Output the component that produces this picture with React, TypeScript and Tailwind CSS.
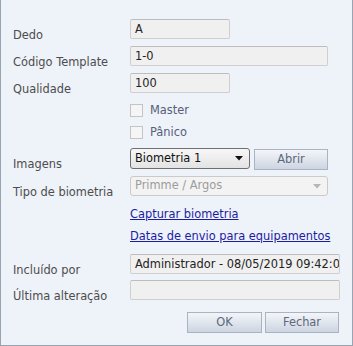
const font = "font-['DejaVu_Sans',Verdana,sans-serif]";

function Label({ text }: { text: string }) {
  return <div className="w-[129px] shrink-0 pt-[8px] pl-[12px] text-[#4d4d4d]">{text}</div>;
}

function TextBox({ value, width }: { value: string; width: string }) {
  return (
    <div
      className={`${width} h-[20px] rounded-[2px] border border-[#cfcfcf] border-t-[#bdbdbd] bg-[#f0f0f0] px-[4px] leading-[18px] text-[#222] overflow-hidden whitespace-nowrap`}
    >
      {value}
    </div>
  );
}

function Check({ label }: { label: string }) {
  return (
    <div className="flex items-center h-[13px] pl-[129px]">
      <div className="w-[13px] h-[13px] border border-[#c4c4c4] bg-[#f5f5f5]" />
      <span className="ml-[7px] text-[#56607a]">{label}</span>
    </div>
  );
}

function BlueButton({ text, width }: { text: string; width: string }) {
  return (
    <div
      className={`${width} h-[21px] border border-[#a9b3c3] bg-[linear-gradient(#f3f5f9,#e2e7ef_45%,#cdd5e1)] text-center leading-[19px] text-[#5e687c]`}
    >
      {text}
    </div>
  );
}

export default function App() {
  return (
    <div className={`${font} text-[11.4px] w-[353px] h-[346px] bg-[#eef2f9] border-x border-b border-[#9aa3b2] pt-[19px]`}>
      {/* Dedo */}
      <div className="flex h-[20px]">
        <Label text="Dedo" />
        <TextBox value="A" width="w-[100px]" />
      </div>
      <div className="flex h-[20px] mt-[7px]">
        <Label text="Código Template" />
        <TextBox value="1-0" width="w-[198px]" />
      </div>
      <div className="flex h-[20px] mt-[7px]">
        <Label text="Qualidade" />
        <TextBox value="100" width="w-[100px]" />
      </div>

      <div className="mt-[11px]">
        <Check label="Master" />
      </div>
      <div className="mt-[9px]">
        <Check label="Pânico" />
      </div>

      {/* Imagens */}
      <div className="flex h-[21px] mt-[9px]">
        <Label text="Imagens" />
        <div className="w-[120px] h-[21px] rounded-[3px] border border-[#6f6f6f] bg-[linear-gradient(#f7f7f7,#e3e3e3)] flex items-center pl-[4px] pr-[6px] text-[#111]">
          <span className="flex-1">Biometria 1</span>
          <svg width="8" height="5" viewBox="0 0 8 5">
            <path d="M0 0h8L4 4.5z" fill="#111" />
          </svg>
        </div>
        <div className="ml-[4px] mt-[1px]">
          <BlueButton text="Abrir" width="w-[74px]" />
        </div>
      </div>

      {/* Tipo */}
      <div className="flex h-[20px] mt-[7px]">
        <Label text="Tipo de biometria" />
        <div className="w-[198px] h-[20px] rounded-[3px] border border-[#cacaca] bg-[#f3f3f3] flex items-center pl-[4px] pr-[6px] text-[#9c9c9c]">
          <span className="flex-1">Primme / Argos</span>
          <svg width="8" height="5" viewBox="0 0 8 5">
            <path d="M0 0h8L4 4.5z" fill="#b5b5b5" />
          </svg>
        </div>
      </div>

      <div className="pl-[129px] mt-[11px] text-[#1c1ca3] underline leading-[14px]">Capturar biometria</div>
      <div className="pl-[129px] mt-[8px] text-[#1c1ca3] underline leading-[14px]">Datas de envio para equipamentos</div>

      <div className="flex h-[20px] mt-[11px]">
        <Label text="Incluído por" />
        <TextBox value="Administrador - 08/05/2019 09:42:00" width="w-[210px]" />
      </div>
      <div className="flex h-[20px] mt-[6px]">
        <Label text="Última alteração" />
        <TextBox value="" width="w-[210px]" />
      </div>

      <div className="flex justify-end gap-[3px] pr-[13px] mt-[12px]">
        <BlueButton text="OK" width="w-[75px]" />
        <BlueButton text="Fechar" width="w-[74px]" />
      </div>
    </div>
  );
}
